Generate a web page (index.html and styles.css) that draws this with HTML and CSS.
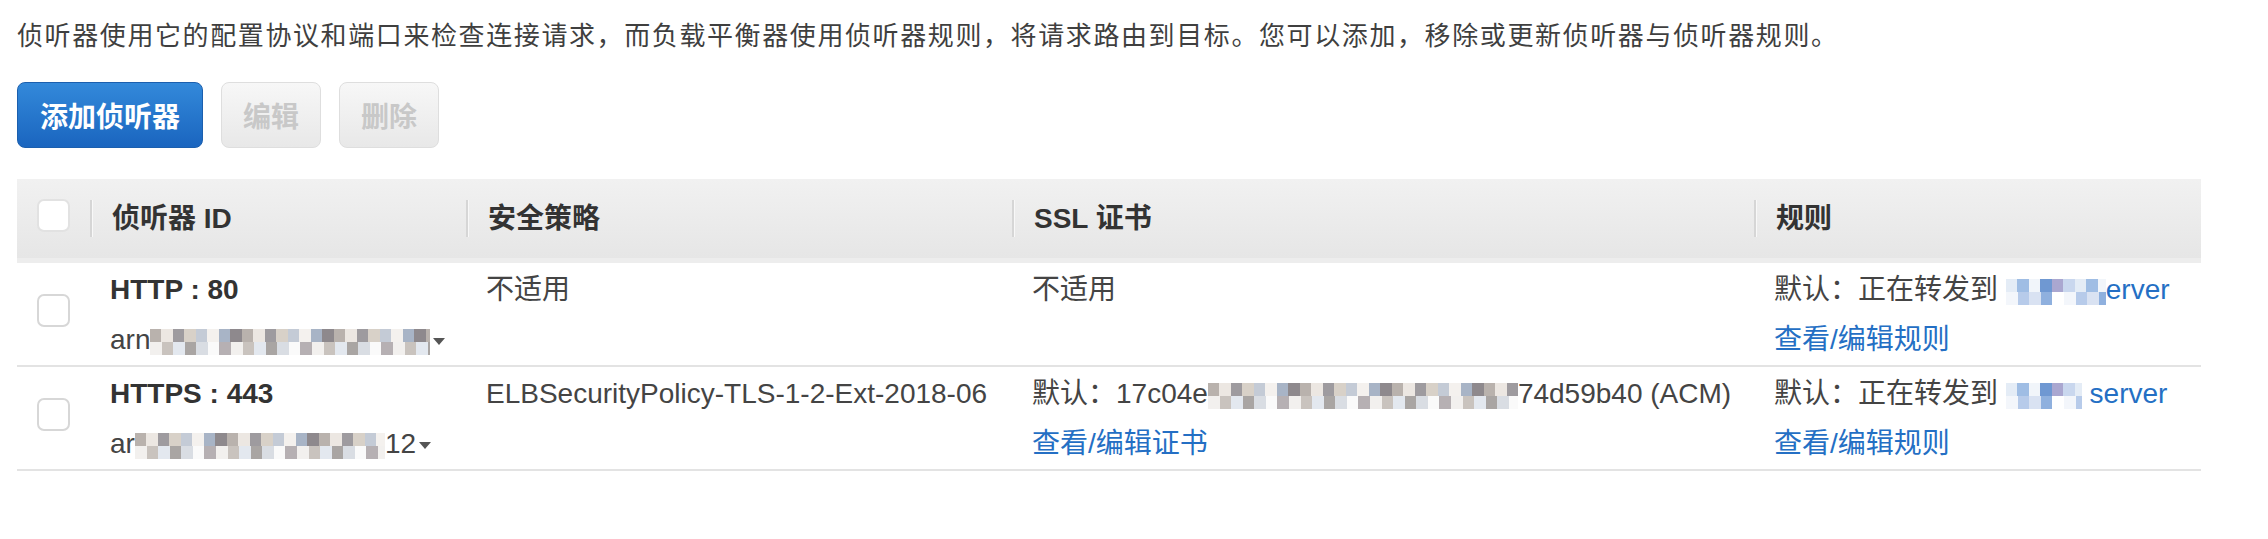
FILE: index.html
```html
<!DOCTYPE html>
<html lang="zh-CN">
  <head>
    <meta charset="UTF-8" />
    <meta name="viewport" content="width=device-width, initial-scale=1.0" />
    <title>侦听器</title>
    <link rel="stylesheet" href="styles.css">
  </head>
  <body>
    <div class="container">
      <p class="intro">侦听器使用它的配置协议和端口来检查连接请求，而负载平衡器使用侦听器规则，将请求路由到目标。您可以添加，移除或更新侦听器与侦听器规则。</p>

      <div class="toolbar">
        <button class="btn btn-primary">添加侦听器</button>
        <button class="btn" disabled>编辑</button>
        <button class="btn" disabled>删除</button>
      </div>

      <table class="listeners">
        <colgroup>
          <col class="col-check">
          <col class="col-id">
          <col class="col-policy">
          <col class="col-cert">
          <col class="col-rules">
        </colgroup>
        <thead>
          <tr>
            <th class="check-cell"><span class="checkbox"></span></th>
            <th><div class="th-inner">侦听器 ID</div></th>
            <th><div class="th-inner">安全策略</div></th>
            <th><div class="th-inner">SSL 证书</div></th>
            <th><div class="th-inner">规则</div></th>
          </tr>
        </thead>
        <tbody>
          <tr>
            <td class="check-cell"><span class="checkbox"></span></td>
            <td>
              <div class="proto">HTTP : 80</div>
              <div class="arn">arn<span class="mosaic w-280"></span><span class="caret"></span></div>
            </td>
            <td>不适用</td>
            <td>不适用</td>
            <td>
              <div>默认：正在转发到 <a class="link" href="#"><span class="mosaic blue w-100"></span>erver</a></div>
              <div><a class="link" href="#">查看/编辑规则</a></div>
            </td>
          </tr>
          <tr>
            <td class="check-cell"><span class="checkbox"></span></td>
            <td>
              <div class="proto">HTTPS : 443</div>
              <div class="arn">ar<span class="mosaic w-250"></span>12<span class="caret"></span></div>
            </td>
            <td>ELBSecurityPolicy-TLS-1-2-Ext-2018-06</td>
            <td>
              <div>默认：17c04e<span class="mosaic w-310"></span>74d59b40 (ACM)</div>
              <div><a class="link" href="#">查看/编辑证书</a></div>
            </td>
            <td>
              <div>默认：正在转发到 <a class="link" href="#"><span class="mosaic blue w-76"></span> server</a></div>
              <div><a class="link" href="#">查看/编辑规则</a></div>
            </td>
          </tr>
        </tbody>
      </table>
    </div>
  </body>
</html>
```

FILE: styles.css
```css
body {
    margin: 0;
    background: #fff;
    color: #444;
    font-family: "Liberation Sans", "Noto Sans CJK SC", sans-serif;
}

.container {
    padding: 18px 0 0 17px;
}

.intro {
    margin: 0;
    font-size: 26px;
    line-height: 36px;
    letter-spacing: 1.6px;
    white-space: nowrap;
    color: #3f3f3f;
}

/* buttons */
.toolbar {
    display: flex;
    gap: 18px;
    margin-top: 28px;
}

.btn {
    box-sizing: border-box;
    width: 100px;
    height: 66px;
    padding: 0;
    border: 1px solid #dedede;
    border-radius: 8px;
    background: linear-gradient(#f7f7f7, #e8e8e8);
    color: #c8c8c8;
    font-family: "Liberation Sans", "Noto Sans CJK SC", sans-serif;
    font-size: 28px;
    font-weight: bold;
}

.btn-primary {
    width: 186px;
    border-color: #1b5fae;
    background: linear-gradient(#3389da, #1a65bf);
    color: #fff;
    cursor: pointer;
}

/* table */
.listeners {
    margin-top: 31px;
    width: 2184px;
    table-layout: fixed;
    border-collapse: separate;
    border-spacing: 0;
    font-size: 28px;
}

.col-check { width: 73px; }
.col-id { width: 376px; }
.col-policy { width: 546px; }
.col-cert { width: 742px; }
.col-rules { width: 447px; }

.listeners th {
    box-sizing: border-box;
    height: 84px;
    padding: 0;
    background: linear-gradient(#f1f1f1, #e6e6e6);
    border-bottom: 5px solid #ededed;
    text-align: left;
    color: #333;
    font-weight: bold;
}

.th-inner {
    height: 37px;
    line-height: 37px;
    padding-left: 20px;
    border-left: 2px solid #d6d6d6;
    box-shadow: inset 1px 0 0 #f8f8f8;
}

.listeners td {
    box-sizing: border-box;
    height: 103px;
    padding: 2px 0 0 20px;
    vertical-align: top;
    line-height: 50px;
    border-bottom: 2px solid #e3e3e3;
    white-space: nowrap;
}

.listeners .check-cell {
    padding-left: 20px;
}

th.check-cell {
    vertical-align: top;
}

.checkbox {
    display: block;
    box-sizing: border-box;
    width: 33px;
    height: 33px;
    border: 2px solid #d7d7d7;
    border-radius: 7px;
    background: #fff;
}

th .checkbox {
    margin-top: 20px;
    border-color: #e2e2e2;
}

td .checkbox {
    margin-top: 29px;
}

.proto {
    font-weight: bold;
    color: #333;
}

.link {
    color: #246fc4;
    text-decoration: none;
}

.caret {
    display: inline-block;
    margin-left: 3px;
    vertical-align: middle;
    border-left: 6px solid transparent;
    border-right: 6px solid transparent;
    border-top: 7px solid #555;
}

/* redacted values */
.mosaic {
    display: inline-block;
    height: 26px;
    vertical-align: middle;
    background:
        repeating-linear-gradient(90deg, #b9b2ad 0 11px, #ece7e2 11px 23px, #9e9b9f 23px 34px, #d8d1c8 34px 46px, #c4cbd6 46px 57px, #f4f1ee 57px 69px, #a8b4c6 69px 80px, #8e898d 80px 92px) top / 100% 13px no-repeat,
        repeating-linear-gradient(90deg, #f2f0ee 0 12px, #c9c3be 12px 23px, #e3e8ef 23px 35px, #a9a5a3 35px 46px, #d9dde3 46px 58px, #fafafa 58px 69px, #b6b0b3 69px 81px) bottom / 100% 13px no-repeat;
}

.mosaic.blue {
    background:
        repeating-linear-gradient(90deg, #e4ecf6 0 11px, #9fbde4 11px 23px, #f1f5fa 23px 34px, #6f98d2 34px 46px, #aaa7d0 46px 57px, #c9d7ee 57px 69px) top / 100% 13px no-repeat,
        repeating-linear-gradient(90deg, #f3f6fb 0 12px, #b7cbea 12px 23px, #d9e2f2 23px 35px, #8fb0de 35px 46px, #ffffff 46px 58px) bottom / 100% 13px no-repeat;
}

.w-76 { width: 76px; }
.w-100 { width: 100px; }
.w-250 { width: 250px; }
.w-280 { width: 280px; }
.w-310 { width: 310px; }
```
